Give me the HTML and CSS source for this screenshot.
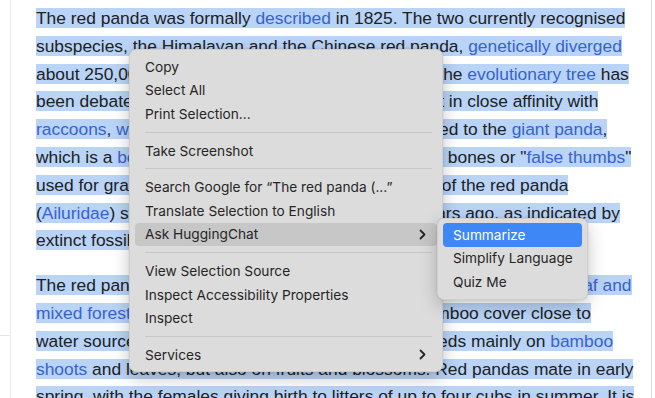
FILE: index.html
```html
<!DOCTYPE html>
<html>

<head>
    <meta charset='UTF-8'>
    <title>Red panda</title>
    <link rel="stylesheet" href="styles.css">
</head>

<body>
    <div class='page'>
        <div class='rail'>
            <div class='rail-top'></div>
        </div>

        <main class='article'>
            <p><span class='sel'>The red panda was formally <a href='#'>described</a> in 1825. The two currently recognised<br>subspecies, the Himalayan and the Chinese red panda, <a href='#'>genetically diverged</a><br>about 250,000 years ago. The red panda's place on the <a href='#'>evolutionary tree</a> has<br>been debated, but modern genetic evidence places it in close affinity with<br><a href='#'>raccoons</a>, <a href='#'>weasels</a>, and <a href='#'>skunks</a>. It is not closely related to the <a href='#'>giant panda</a>,<br>which is a <a href='#'>bear</a>, though both possess elongated wrist bones or "<a href='#'>false thumbs</a>"<br>used for grasping bamboo. The evolutionary lineage of the red panda<br>(<a href='#'>Ailuridae</a>) stretches back around 25 to 18 million years ago, as indicated by<br>extinct fossil relatives found in Eurasia and North America.</span></p>

            <p><span class='sel'>The red panda inhabits coniferous forests as well as <a href='#'>temperate broadleaf and</a><br><a href='#'>mixed forests</a>, favouring steep slopes with dense bamboo cover close to<br>water sources. It is solitary and largely arboreal. It feeds mainly on <a href='#'>bamboo</a><br><a href='#'>shoots</a> and leaves, but also on fruits and blossoms. Red pandas mate in early<br>spring, with the females giving birth to litters of up to four cubs in summer. It is</span></p>
        </main>
    </div>

    <!-- Context menu -->
    <div class='menu main-menu'>
        <div class='menu-item'>Copy</div>
        <div class='menu-item'>Select All</div>
        <div class='menu-item'>Print Selection...</div>
        <div class='menu-sep'></div>
        <div class='menu-item'>Take Screenshot</div>
        <div class='menu-sep'></div>
        <div class='menu-item'>Search Google for “The red panda (...”</div>
        <div class='menu-item'>Translate Selection to English</div>
        <div class='menu-item active'>Ask HuggingChat
            <svg class='chevron' width='7' height='11' viewBox='0 0 7 11'><path d='M1.5 1.5 L5.5 5.5 L1.5 9.5' fill='none' stroke='#262626' stroke-width='1.8' stroke-linecap='round' stroke-linejoin='round'/></svg>
        </div>
        <div class='menu-sep'></div>
        <div class='menu-item'>View Selection Source</div>
        <div class='menu-item'>Inspect Accessibility Properties</div>
        <div class='menu-item'>Inspect</div>
        <div class='menu-sep'></div>
        <div class='menu-item'>Services
            <svg class='chevron' width='7' height='11' viewBox='0 0 7 11'><path d='M1.5 1.5 L5.5 5.5 L1.5 9.5' fill='none' stroke='#262626' stroke-width='1.8' stroke-linecap='round' stroke-linejoin='round'/></svg>
        </div>
    </div>

    <!-- Submenu -->
    <div class='menu sub-menu'>
        <div class='menu-item selected'>Summarize</div>
        <div class='menu-item'>Simplify Language</div>
        <div class='menu-item'>Quiz Me</div>
    </div>
</body>

</html>
```

FILE: styles.css
```css
body {
    margin: 0;
    background: #ffffff;
    font-family: "Liberation Sans", Arial, sans-serif;
    overflow: hidden;
}

.page {
    display: grid;
    grid-template-columns: 11px 1fr;
    width: 651px;
    height: 398px;
    border-right: 1px solid #dcdcdc;
}

.rail {
    border-right: 1px solid #ececec;
}

.rail-top {
    height: 335px;
    border-bottom: 1px solid #e4e4e4;
}

.article {
    padding: 5px 0 0 25px;
    color: #202122;
    font-size: 17.4px;
    line-height: 27.8px;
    white-space: nowrap;
}

.article p {
    margin: 0 0 17px;
}

.article a {
    color: #3663cf;
    text-decoration: none;
}

.sel {
    background: #b9d4f7;
}

.menu {
    position: absolute;
    background: #dddcdc;
    border: 1px solid #cfcfcf;
    border-radius: 7px;
    box-shadow: 0 6px 18px rgba(0, 0, 0, 0.22), 0 0 2px rgba(0, 0, 0, 0.15);
    padding: 5px 0 4px;
    box-sizing: border-box;
    font-family: Inter, "Liberation Sans", sans-serif;
    font-size: 13.7px;
    color: #262626;
}

.main-menu {
    left: 129px;
    top: 49px;
    width: 314px;
}

.sub-menu {
    left: 437px;
    top: 218px;
    width: 151px;
    padding: 4px 0 5px;
}

.menu-item {
    display: flex;
    align-items: center;
    justify-content: space-between;
    height: 23.6px;
    margin: 0 5px;
    padding: 0 10px;
    border-radius: 4px;
    white-space: nowrap;
}

.menu-item.active {
    background: #c7c7c7;
}

.menu-item.selected {
    background: #3d87f6;
    color: #ffffff;
}

.chevron {
    margin-right: 1px;
}

.menu-sep {
    height: 1px;
    margin: 6px 10px 6px 15px;
    background: #c8c8c8;
}
```
